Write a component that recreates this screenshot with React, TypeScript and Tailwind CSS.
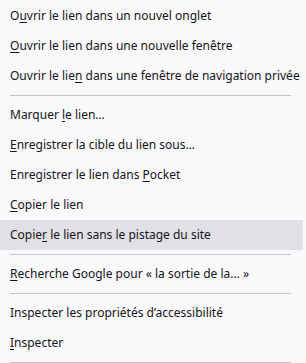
import React from 'react';

type Item = { pre: string; key?: string; post?: string; hover?: boolean } | 'sep';

const items: Item[] = [
  { pre: 'O', key: 'u', post: 'vrir le lien dans un nouvel onglet' },
  { pre: '', key: 'O', post: 'uvrir le lien dans une nouvelle fenêtre' },
  { pre: 'Ouvrir le lie', key: 'n', post: ' dans une fenêtre de navigation privée' },
  'sep',
  { pre: 'Marquer ', key: 'l', post: 'e lien…' },
  { pre: '', key: 'E', post: 'nregistrer la cible du lien sous…' },
  { pre: 'Enregistrer le lien dans ', key: 'P', post: 'ocket' },
  { pre: '', key: 'C', post: 'opier le lien' },
  { pre: 'Copie', key: 'r', post: ' le lien sans le pistage du site', hover: true },
  'sep',
  { pre: '', key: 'R', post: 'echerche Google pour « la sortie de la… »' },
  'sep',
  { pre: 'Inspecter les propriétés d’accessibilité' },
  { pre: '', key: 'I', post: 'nspecter' },
  'sep',
];

export default function App() {
  return (
    <div
      className="w-[306px] h-[363px] overflow-hidden bg-[#f9f9fb] pt-px text-[12px] text-[#15141a]"
      style={{ fontFamily: '"Noto Sans", "Open Sans", sans-serif' }}
    >
      {items.map((it, i) =>
        it === 'sep' ? (
          <div key={i} className="py-1 pl-[10px] pr-[15px]">
            <div className="h-px bg-[#c4c4c8]" />
          </div>
        ) : (
          <div
            key={i}
            className={`flex h-[30px] items-center pl-[10px] mr-[3px] whitespace-nowrap ${it.hover ? 'bg-[#e0e0e6]' : ''}`}
          >
            <span>
              {it.pre}
              {it.key && <span className="underline underline-offset-2">{it.key}</span>}
              {it.post}
            </span>
          </div>
        )
      )}
    </div>
  );
}
